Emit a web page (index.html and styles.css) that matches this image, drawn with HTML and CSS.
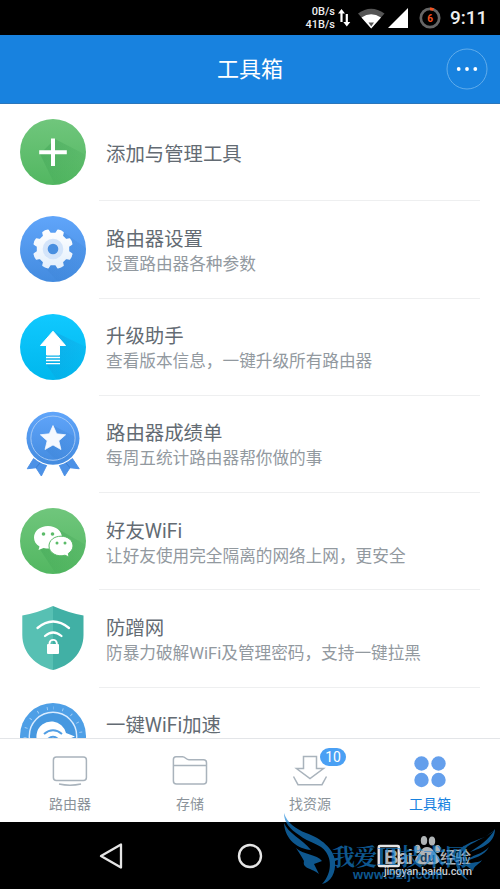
FILE: index.html
```html
<!DOCTYPE html>
<html lang="zh-CN">
<head>
<meta charset="utf-8">
<title>工具箱</title>
<link rel="stylesheet" href="styles.css">
</head>
<body>
<div class="status">
  <div class="rate"><span>0B/s</span><span>41B/s</span></div>
  <svg class="arrows" width="14" height="20" viewBox="339 8 14 20"><path d="M342.500 22V12M347.800 14V24" stroke="#fff" stroke-width="2.200"/><path d="M339 13.500L342.500 9L346 13.500ZM344.300 22L347.800 26.500L351.300 22Z" fill="#fff"/></svg>
  <svg class="wifi" width="28" height="22" viewBox="358 6 28 22"><path d="M359 12.500Q372 3 385.500 12.500L372.200 27.500Z" fill="#555"/><path d="M362.500 16.500Q372 10 382 16.500L372.200 27.500Z" fill="#fff"/><path d="M369.500 21.500H375L372.200 25.500Z" fill="#555"/></svg>
  <svg class="signal" width="20" height="20" viewBox="0 0 20 20"><path d="M0 20L20 0V20Z" fill="#fff"/></svg>
  <svg class="ring" width="22" height="22" viewBox="0 0 22 22"><circle cx="11" cy="11" r="9.200" fill="none" stroke="#666" stroke-width="2.700"/><path d="M11 1.800A9.200 9.200 0 0 1 14.500 2.500" fill="none" stroke="#f4511e" stroke-width="2.700"/><text x="11" y="14.800" text-anchor="middle" class="ring-text">6</text></svg>
  <time>9:11</time>
</div>
<header class="bar"><h1>工具箱</h1>
  <svg class="more" width="42" height="42" viewBox="0 0 42 42"><circle cx="21" cy="21" r="20" fill="none" stroke="#60aceb"/><g fill="#fff"><circle cx="12.700" cy="21" r="1.900"/><circle cx="21" cy="21" r="1.900"/><circle cx="29.300" cy="21" r="1.900"/></g></svg>
</header>
<main class="list">
  <div class="row">
    <svg class="icon" viewBox="0 0 66 66"><defs><linearGradient id="green" x2="0" y2="1"><stop stop-color="#70c67c"/><stop offset="1" stop-color="#52b761"/></linearGradient><linearGradient id="blue" x2="0" y2="1"><stop stop-color="#60a5fa"/><stop offset="1" stop-color="#438bdf"/></linearGradient><linearGradient id="cyan" x2="0" y2="1"><stop stop-color="#10c9ff"/><stop offset="1" stop-color="#00b7ed"/></linearGradient><linearGradient id="white" gradientUnits="userSpaceOnUse" x1="0" y1="13" x2="0" y2="53"><stop stop-color="#fff"/><stop offset="1" stop-color="#e3effc"/></linearGradient><linearGradient id="fade" x2="1" y2="1"><stop stop-color="#1e883c" stop-opacity=".28"/><stop offset=".8" stop-color="#1e883c" stop-opacity=".03"/></linearGradient><linearGradient id="fadeblue" x2="1" y2="1"><stop stop-color="#2469b5" stop-opacity=".25"/><stop offset=".8" stop-color="#2469b5" stop-opacity=".03"/></linearGradient><clipPath id="disc"><circle cx="33" cy="33" r="33"/></clipPath></defs><circle cx="33" cy="33" r="33" fill="url(#green)"/><path d="M20 35L35 20L66 36V66H35Z" fill="url(#fade)" clip-path="url(#disc)"/><path d="M33 19.500V47M19.200 33.300H46.800" stroke="#fff" stroke-width="4"/></svg>
    <div class="copy"><h2>添加与管理工具</h2></div>
  </div>
  <div class="row">
    <svg class="icon" viewBox="0 0 66 66"><circle cx="33" cy="33" r="33" fill="url(#blue)"/><path d="M17 43L42 15L66 32V66H38Z" fill="url(#fadeblue)" clip-path="url(#disc)"/><path d="M35.700 17.600L38 14.300Q41 14.700 43 16.500L42.200 20L46 23.800L49.500 23Q51.300 25 51.700 28L48.400 30.300V35.700L51.700 38Q51.300 41 49.500 43L46 42.200L42.200 46L43 49.500Q41 51.300 38 51.700L35.700 48.400H30.300L28 51.700Q25 51.300 23 49.500L23.800 46L20 42.200L16.500 43Q14.700 41 14.300 38L17.600 35.700V30.300L14.300 28Q14.700 25 16.500 23L20 23.800L23.800 20L23 16.500Q25 14.700 28 14.300L30.300 17.600Z" fill="url(#white)" stroke="url(#white)" stroke-width="1.600" stroke-linejoin="round"/><circle cx="33" cy="33" r="10.300" fill="#d3e4fa"/><circle cx="33" cy="33" r="5.300" fill="#498fe0"/></svg>
    <div class="copy"><h2>路由器设置</h2><p>设置路由器各种参数</p></div>
  </div>
  <div class="row">
    <svg class="icon" viewBox="0 0 66 66"><circle cx="33" cy="33" r="33" fill="url(#cyan)"/><path d="M33 17L66 33V66H37L26 50Z" fill="url(#fadeblue)" clip-path="url(#disc)"/><path d="M33 17.200L45.500 31.500H39.500V41H26.500V31.500H20.500Z" fill="#fff" stroke="#fff" stroke-linejoin="round"/><path d="M26 43.500H40M26 46.500H40M26 49.700H40" stroke="#fff" stroke-width="1.300"/></svg>
    <div class="copy"><h2>升级助手</h2><p>查看版本信息，一键升级所有路由器</p></div>
  </div>
  <div class="row">
    <svg class="icon" viewBox="0 -2 66 68"><path d="M13 47L6.500 57.500L15.500 56.500L21 65L26.500 54ZM53 47L60 57.500L50.500 56.500L45 65L39.500 54Z" fill="#4c91e6" stroke="#4c91e6" stroke-linejoin="round"/><path d="M20 51L15.500 56.500M46 51L50.500 56.500" stroke="#397ccd" fill="none"/><circle cx="33" cy="26" r="28.500" fill="#fff"/><circle cx="33" cy="26" r="27.300" fill="url(#blue)"/><path d="M33 13L57 25A24 24 0 0 1 38 50L25 38Z" fill="url(#fadeblue)"/><circle cx="33" cy="26" r="22.800" fill="none" stroke="#a5c9f5"/><path d="M33 13L36.800 21.500L46 22.500L39 28.700L41.200 37.700L33 33L24.800 37.700L27 28.700L20 22.500L29.200 21.500Z" fill="#f5f9ff" stroke="#f5f9ff" stroke-width=".8" stroke-linejoin="round"/></svg>
    <div class="copy"><h2>路由器成绩单</h2><p>每周五统计路由器帮你做的事</p></div>
  </div>
  <div class="row">
    <svg class="icon" viewBox="0 0 66 66"><circle cx="33" cy="33" r="33" fill="url(#green)"/><path d="M38 21L66 37V66H36L19 40Z" fill="url(#fade)" clip-path="url(#disc)"/><path d="M28 18C20 18 14 23 14 29.500C14 33.500 16 36.500 19.500 38.500L18.500 42L23.500 40C35 42.500 42 36.500 42 29.500C42 23 36 18 28 18Z" fill="#fff"/><path d="M41 28.200C34 28.200 29 32.500 29 38C29 45 37 49.500 45 47.200L49 49L48.300 45.500C51 43.500 53 41 53 38C53 32.500 48 28.200 41 28.200Z" fill="#fff" stroke="#5aba68"/><g fill="#5bbb69"><circle cx="23.500" cy="26" r="1.800"/><circle cx="32.500" cy="26" r="1.800"/><circle cx="37" cy="35" r="1.500"/><circle cx="45" cy="35" r="1.500"/></g></svg>
    <div class="copy"><h2>好友WiFi</h2><p>让好友使用完全隔离的网络上网，更安全</p></div>
  </div>
  <div class="row">
    <svg class="icon" viewBox="0 0 66 66"><path d="M33 1Q17 8 2.300 10.500V30C2.300 48 16 61 33 65Z" fill="#57c0b3"/><path d="M33 1Q49 8 63.500 10.500V30C63.500 48 50 61 33 65Z" fill="#41b0a5"/><g stroke="#fff" stroke-linecap="round" fill="none"><path d="M17.500 23Q33 10 49 23" stroke-width="2.300"/><path d="M25 31Q33 24 41.500 31" stroke-width="2.200"/><path d="M29.500 41V38A3.700 3.700 0 0 1 36.800 38V41" stroke-width="1.800"/></g><rect x="27" y="39" width="12" height="10" rx="1" fill="#fff"/></svg>
    <div class="copy"><h2>防蹭网</h2><p>防暴力破解WiFi及管理密码，支持一键拉黑</p></div>
  </div>
  <div class="row">
    <svg class="icon" viewBox="0 0 66 66"><circle cx="33" cy="33" r="33" fill="#4e9fe6"/><circle cx="33" cy="33" r="28" fill="none" stroke="#a6d0f6" stroke-width="3" stroke-dasharray=".9 9.096" stroke-dashoffset=".45" transform="rotate(-90 33 33)"/><circle cx="33" cy="33" r="23.700" fill="#4698e0" stroke="#d8ebff" stroke-width="1.400"/><path d="M33 18.500A15 15 0 0 1 46 30L55 33.500L46 37A15 15 0 1 1 33 18.500Z" fill="#fff"/><path d="M24 31Q33 23.500 42 31M28 36Q33 31.500 38 36" fill="none" stroke="#519ee4" stroke-width="2"/></svg>
    <div class="copy"><h2 class="lone">一键WiFi加速</h2></div>
  </div>
</main>
<nav class="tabs">
  <div class="tab"><svg width="36" height="36" viewBox="0 0 36 36"><g fill="none" stroke="#a9b3bc" stroke-width="1.500"><rect x="1.400" y="3" width="33" height="23.500" rx="3"/><path d="M7 30Q18 32.300 29 30"/></g></svg><span>路由器</span></div>
  <div class="tab"><svg width="36" height="36" viewBox="0 0 36 36"><path d="M1.400 11.500H34.500M4 2.700H10.500C13.500 2.700 14 5.700 17 5.700H31.500Q34.500 5.700 34.500 8.700V27Q34.500 30 31.500 30H4.500Q1.400 30 1.400 27V5.700Q1.400 2.700 4 2.700Z" fill="none" stroke="#a9b3bc" stroke-width="1.500"/></svg><span>存储</span></div>
  <div class="tab"><svg width="36" height="36" viewBox="0 0 36 36"><path d="M11.500 2.500H24.500V14.500H31.500L18 24.500L4.500 14.500H11.500ZM1.500 22.500L6 30.700H30L34.500 22.500" fill="none" stroke="#a9b3bc" stroke-width="1.500"/></svg><b class="badge">10</b><span>找资源</span></div>
  <div class="tab active"><svg width="36" height="36" viewBox="0 0 36 36"><g fill="#649fec"><circle cx="9.500" cy="9.500" r="7.200"/><circle cx="26.500" cy="9.500" r="7.200"/><circle cx="9.500" cy="26" r="7.200"/><circle cx="26.500" cy="26" r="7.200"/></g></svg><span>工具箱</span></div>
</nav>
<footer class="system">
  <svg width="26" height="28" viewBox="0 0 26 28"><path d="M3 14L23 2.500V25.500Z" fill="none" stroke="#e5e5e5" stroke-width="2.300" stroke-linejoin="round"/></svg>
  <svg width="26" height="28" viewBox="0 0 26 28"><circle cx="13" cy="14" r="11" fill="none" stroke="#e5e5e5" stroke-width="2.400"/></svg>
  <svg width="26" height="28" viewBox="0 0 26 28"><rect x="2.800" y="4" width="20" height="20" rx="1" fill="none" stroke="#e5e5e5" stroke-width="2.500"/></svg>
</footer>
<svg class="watermark" width="220" height="79" viewBox="280 810 220 79">
  <g fill="#c9cdd0"><g opacity=".88"><text x="384" y="864" textLength="29" class="baidu">Bai</text><ellipse cx="417.500" cy="849" rx="3" ry="4.300"/><ellipse cx="424" cy="840.500" rx="3.200" ry="4.500"/><ellipse cx="432" cy="841" rx="3.200" ry="4.500"/><ellipse cx="437.500" cy="849" rx="3" ry="4"/><path d="M427 847C421 847 421 853 417 856C412 862 418 866 427 864C436 866 443 862 438 856C434 853 433 847 427 847Z"/><text x="440" y="863" textLength="31" class="experience">经验</text></g><text x="384" y="875" textLength="88" class="domain">jingyan.baidu.com</text></g><text x="420" y="862" textLength="15" class="du">du</text>
  <g fill="#1684d8" opacity=".66"><path d="M284 813C287 823 296 829 306 833C321 838 334 849 335 861C336 873 331 882 322 884C330 876 333 862 326 852C321 844 309 843 299 835C290 829 284 823 284 813Z"/><path d="M284 823C288 833 302 839 311 850C298 849 285 840 284 823ZM296 848C303 855 317 854 322 861L314 864L319 874C312 868 302 869 304 861Q302 857 296 848Z"/><path d="M495 829C484 841 466 842 460 855C457 863 461 873 468 880C461 878 454 866 456 857C461 839 486 842 495 829ZM495 829C495 843 482 848 470 852C479 846 488 841 495 829ZM489 847C484 857 474 857 465 862C472 854 482 855 489 847ZM482 860C479 865 474 865 473 871C470 869 467 865 464 866C469 861 477 864 482 860Z"/><text x="332" y="865" textLength="136" class="site">我爱IT技术网</text><text x="353" y="879" textLength="90" class="url">www.52ij.com</text></g>
</svg>
</body>
</html>
```
FILE: styles.css
```css
* { box-sizing: border-box; }
body { margin: 0; width: 500px; height: 889px; overflow: hidden; display: flex; flex-direction: column; position: relative; background: #fff; font-family: Roboto, "Noto Sans CJK SC", sans-serif; }
svg { display: block; flex-shrink: 0; }
.status { height: 35px; flex: none; background: #000; color: #eee; display: flex; align-items: center; justify-content: flex-end; padding-right: 11px; }
.rate { display: flex; flex-direction: column; text-align: right; font-size: 11px; font-weight: 500; line-height: 13px; margin-right: 3px; }
.wifi { margin-left: 5px; }
.signal { margin-left: 3px; }
.ring { margin-left: 11px; }
.ring-text { font-size: 10px; font-weight: 700; fill: #f4511e; }
.status time { width: 39px; margin-left: 9px; font-size: 19px; font-weight: 500; white-space: nowrap; }
.bar { height: 69px; flex: none; background: #1882df; display: grid; grid-template-columns: 54px 1fr 54px; align-items: center; border-bottom: 1px solid #2a76bb; }
.bar h1 { grid-column: 2; margin: 0; padding-top: 2px; text-align: center; font-size: 22px; line-height: 30px; font-weight: 400; color: #fff; }
.list { flex: 1; min-height: 0; overflow: hidden; }
.row { height: 97.250px; display: flex; align-items: center; padding-left: 20px; }
.icon { width: 66px; height: 66px; margin-bottom: 1px; }
.copy { height: 100%; flex: 1; margin: 0 20px 0 13px; padding: 5px 0 0 7px; border-bottom: 1px solid #eeeff0; display: flex; flex-direction: column; justify-content: center; white-space: nowrap; }
.copy h2 { margin: 0; font-size: 19.400px; line-height: 26px; font-weight: 400; color: #636b73; }
.copy .lone { margin-bottom: 24px; }
.copy p { margin: 0; font-size: 16.650px; line-height: 24px; color: #92999f; }
.tabs { height: 84px; flex: none; border-top: 1px solid #e3e5e8; display: flex; padding: 0 10px; background: #fff; }
.tab { flex: 1; padding-top: 15px; display: flex; flex-direction: column; align-items: center; position: relative; font-size: 14px; line-height: 20px; color: #8b939a; }
.tab svg { margin-left: -1px; }
.tab span { margin-top: 4px; }
.tab.active { color: #1882df; }
.badge { position: absolute; left: 70px; top: 9px; width: 26px; height: 18px; border-radius: 9px; background: #4aa0f4; color: #fff; font-weight: 400; line-height: 19px; text-align: center; }
.system { height: 67px; flex: none; background: #000; display: flex; align-items: center; padding: 0 98px; justify-content: space-between; }
.watermark { position: absolute; left: 280px; top: 810px; }
.site { font: 700 23px "Noto Serif CJK SC", "Noto Sans CJK SC", serif; }
.url { font: 700 13px "Liberation Sans", sans-serif; }
.baidu { font: 700 20px "Liberation Sans", sans-serif; }
.du { font: 700 12px "Liberation Sans", sans-serif; fill: #174061; }
.experience { font: 500 16px "Noto Sans CJK SC", sans-serif; }
.domain { font: 500 11px Roboto, sans-serif; }
```
